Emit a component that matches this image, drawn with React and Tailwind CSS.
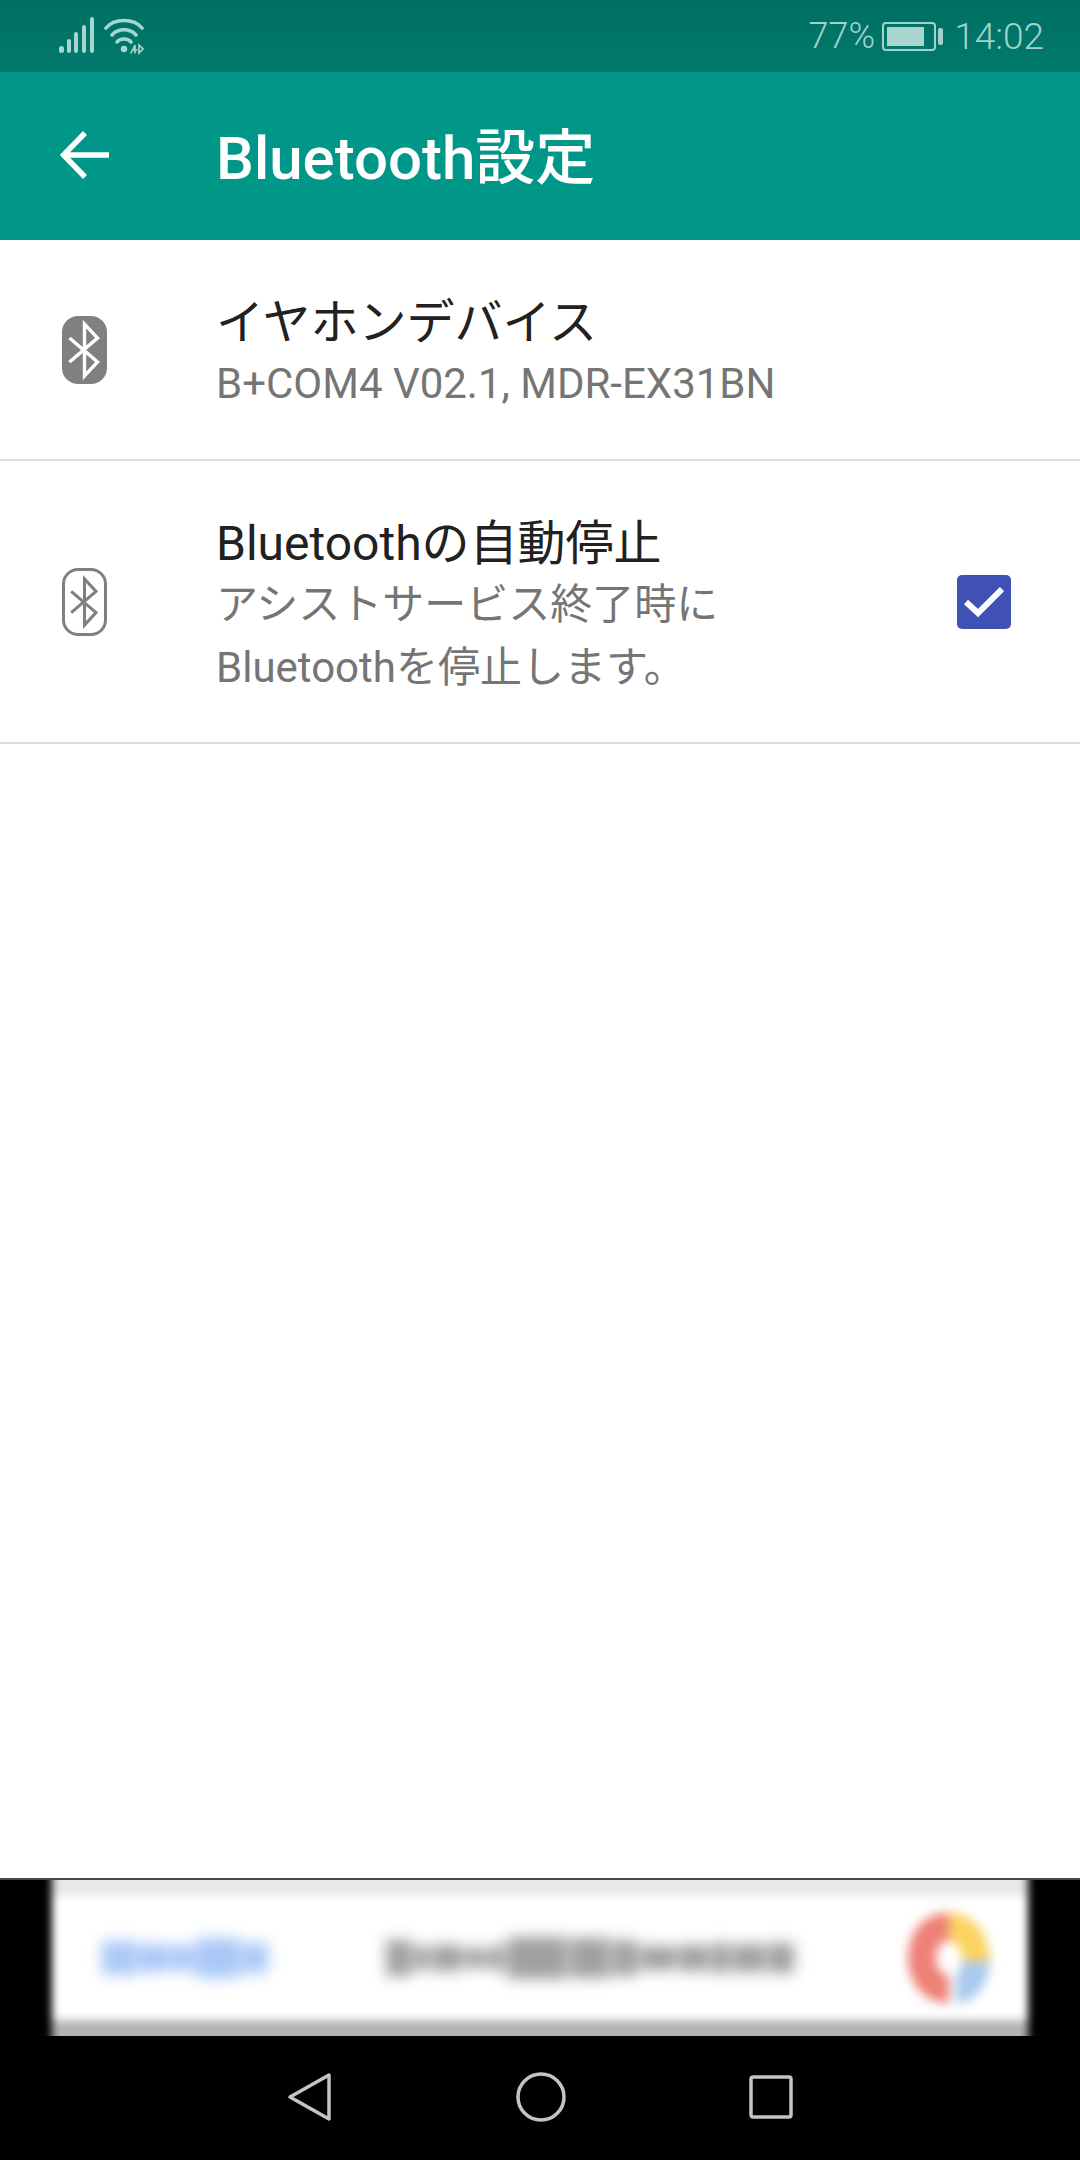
const latin = "font-['Roboto','Noto_Sans_CJK_JP',sans-serif]"

// widths and heights of the smudges in the blurred ad text
const blueBlobs = [[34, 34], [30, 28], [24, 26], [44, 40], [26, 30]]
const grayBlobs = [[26, 36], [14, 24], [30, 26], [20, 20], [16, 24], [60, 42], [40, 40], [24, 36], [36, 24], [30, 26], [18, 30], [32, 28], [26, 30]]

function BluetoothRune({ color, className }) {
  return (
    <svg viewBox="0 0 44 68" className={className} fill="none" stroke={color} strokeWidth="3.4" strokeLinejoin="miter">
      <path d="M7 22 L35 46 L22 60 L22 8 L35 22 L7 46" />
    </svg>
  )
}

function StatusBar() {
  return (
    <div className={`${latin} h-[72px] bg-gradient-to-b from-[#006f63] to-[#007a6c] flex items-center justify-between pl-[59px] pr-[36px] text-[#9fd3cb]`}>
      <div className="flex items-start gap-[9px]">
        <svg width="36" height="38" viewBox="0 0 36 38" fill="#a5d6cf">
          <rect x="0" y="29" width="5" height="7" rx="2.5" />
          <rect x="8" y="22" width="4" height="14" rx="2" />
          <rect x="15" y="15" width="4" height="21" rx="2" />
          <rect x="23" y="8" width="4" height="28" rx="2" />
          <rect x="31" y="0" width="4" height="36" rx="2" />
        </svg>
        <svg width="40" height="38" viewBox="0 0 40 38" fill="none" stroke="#a5d6cf" strokeWidth="3.6" strokeLinecap="round">
          <path d="M2 11 C10 1 30 1 38 11" />
          <path d="M8 18 C14 11 26 11 32 18" />
          <path d="M13 25 C16 21 24 21 27 25" />
          <circle cx="20" cy="32" r="3.2" fill="#a5d6cf" stroke="none" />
          <path d="M27 36 L31 28 V36 M29 33 H33 M35 28 V36 L39 32 Z" strokeWidth="1.6" />
        </svg>
      </div>
      <div className="flex items-center text-[36px] font-light leading-none">
        <span>77%</span>
        <div className="ml-[7px] w-[54px] h-[29px] border-2 border-[#9fd3cb] rounded-[4px] p-[3px]">
          <div className="h-full w-[37px] bg-[#a9d6cf]" />
        </div>
        <div className="ml-[2px] w-[5px] h-[17px] bg-[#9fd3cb] rounded-[2px]" />
        <span className="ml-[11px] text-[37px]">14:02</span>
      </div>
    </div>
  )
}

function AppBar() {
  return (
    <div className="h-[168px] bg-[#009688] flex items-center pl-[60px] text-white">
      <svg width="50" height="50" viewBox="0 0 50 50" fill="none" stroke="#fff" strokeWidth="5.5" className="mt-[-2px]">
        <path d="M49 25 H4 M25 3 L3.500 25 L25 47" />
      </svg>
      <div className={`${latin} ml-[106px] mt-[5px] text-[60px] font-medium leading-none`}>Bluetooth設定</div>
    </div>
  )
}

function Row({ icon, title, lines, right, className }) {
  return (
    <div className={`flex items-center pl-[62px] pr-[69px] border-b-2 border-[#dedede] ${className}`}>
      <div className="w-[154px] shrink-0">{icon}</div>
      <div className={`${latin} flex-1 mt-[10px]`}>
        <div className="text-[48px] leading-[58px] text-[#212121]">{title}</div>
        {lines.map(l => <div key={l} className="text-[42px] leading-[63px] text-[#757575]">{l}</div>)}
      </div>
      {right}
    </div>
  )
}

function AdBanner() {
  return (
    <div className="h-[156px] px-[52px] overflow-hidden shrink-0">
      <div className="h-[176px] mt-[-10px] bg-white blur-[4px] flex flex-col">
        <div className="h-[26px] bg-[#e8e8e8]" />
        <div className="flex-1 flex items-center pl-[50px] pr-[36px]">
          <div className="w-[180px] flex gap-[2px] items-center blur-[6px]">
            {blueBlobs.map(([w, h], i) => <div key={i} className="bg-[#a9c8f7]" style={{ width: w, height: h }} />)}
          </div>
          <div className="ml-[104px] flex gap-[3px] items-center blur-[6px]">
            {grayBlobs.map(([w, h], i) => <div key={i} className="bg-[#a0a0a0]" style={{ width: w, height: h }} />)}
          </div>
          <svg width="86" height="90" viewBox="0 0 86 90" className="ml-auto blur-[3px]" fill="none" strokeWidth="28">
            <path d="M43 14 C22 14 16 32 16 45 C16 60 24 76 43 76" stroke="#ee7f76" />
            <path d="M43 14 C60 14 70 30 70 48" stroke="#fbd35f" />
            <path d="M70 48 C70 60 62 76 50 76" stroke="#a9c9ef" />
          </svg>
        </div>
        <div className="h-[26px] bg-[#b4b4b4]" />
      </div>
    </div>
  )
}

function NavBar() {
  return (
    <div className="flex-1 flex items-center justify-center gap-[183px] pb-[2px]">
      <svg width="46" height="50" viewBox="0 0 46 50" fill="none" stroke="#c4c4c4" strokeWidth="3.5" strokeLinejoin="round">
        <path d="M42 3 V47 L3 25 Z" />
      </svg>
      <svg width="50" height="50" viewBox="0 0 50 50" fill="none" stroke="#c4c4c4" strokeWidth="3.5">
        <circle cx="25" cy="25" r="23" />
      </svg>
      <svg width="44" height="44" viewBox="0 0 44 44" fill="none" stroke="#c4c4c4" strokeWidth="3.5">
        <rect x="2" y="2" width="40" height="40" rx="2" />
      </svg>
    </div>
  )
}

export default function App() {
  return (
    <div className="w-[1080px] h-[2160px] flex flex-col bg-white overflow-hidden">
      <StatusBar />
      <AppBar />
      <Row
        className="h-[221px]"
        title="イヤホンデバイス"
        lines={['B+COM4 V02.1, MDR-EX31BN']}
        icon={
          <div className="w-[45px] h-[68px] rounded-[16px] bg-[#808080] flex items-center justify-center">
            <BluetoothRune color="#fff" className="w-[45px] h-[68px]" />
          </div>
        }
      />
      <Row
        className="h-[283px]"
        title="Bluetoothの自動停止"
        lines={['アシストサービス終了時に', 'Bluetoothを停止します。']}
        icon={
          <div className="w-[45px] h-[68px] rounded-[16px] border-[3px] border-[#808080] flex items-center justify-center">
            <BluetoothRune color="#808080" className="w-[39px] h-[62px]" />
          </div>
        }
        right={
          <div className="w-[54px] h-[54px] rounded-[5px] bg-[#3f51b5] flex items-center justify-center shrink-0">
            <svg width="40" height="32" viewBox="0 0 40 32" fill="none" stroke="#fff" strokeWidth="6">
              <path d="M2 16 L14 27 L38 3" />
            </svg>
          </div>
        }
      />
      <div className="flex-1" />
      <div className="h-[282px] bg-black border-t-2 border-[#4a4a4a] flex flex-col">
        <AdBanner />
        <NavBar />
      </div>
    </div>
  )
}
